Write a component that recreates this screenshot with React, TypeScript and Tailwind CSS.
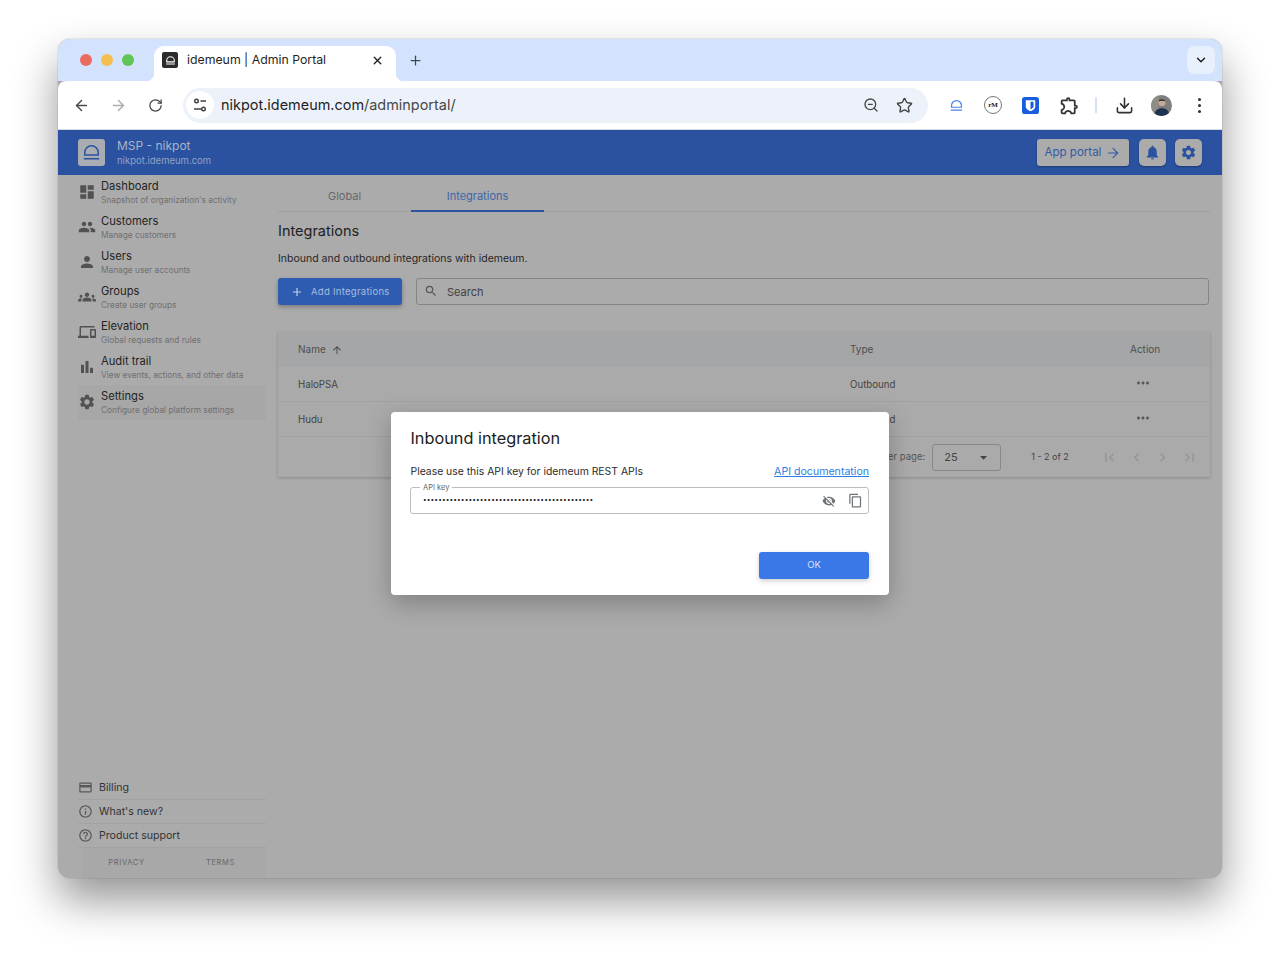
import React from "react";
import { ArrowLeft, ArrowRight, RotateCw, ZoomOut, Star, Download, X, Plus, ChevronDown } from "lucide-react";
import {
  MdDashboard, MdPeople, MdPerson, MdGroups, MdDevices, MdBarChart, MdSettings, MdOutlineCreditCard,
  MdInfoOutline, MdHelpOutline, MdVisibilityOff, MdContentCopy, MdMoreHoriz, MdNotifications,
  MdArrowUpward, MdSearch, MdAdd, MdFirstPage, MdChevronLeft, MdChevronRight, MdLastPage, MdArrowDropDown, MdOutlineExtension,
} from "react-icons/md";

function Dome({ className, strokeWidth = 2 }: { className?: string; strokeWidth?: number }) {
  return (
    <svg viewBox="0 0 24 24" fill="none" stroke="currentColor" strokeWidth={strokeWidth} className={className}>
      <path d="M5 14.5v-2.5a7 7 0 0 1 14 0v2.5z" />
      <path d="M4 18.5h16" />
    </svg>
  );
}

function Tune() {
  return (
    <svg viewBox="0 0 16 16" fill="none" stroke="#3c4043" strokeWidth="1.4" className="w-[16px] h-[16px]">
      <circle cx="4.5" cy="4" r="1.8" />
      <path d="M8.5 4H14" />
      <circle cx="11.5" cy="12" r="1.8" />
      <path d="M2 12h7.5" />
    </svg>
  );
}

function Bitwarden() {
  return (
    <svg viewBox="0 0 18 18" className="w-[17px] h-[17px]">
      <rect width="18" height="18" rx="3" fill="#175ddc" />
      <path d="M4 3.5h10v6.5c0 2.6-2.6 4.2-5 5-2.4-.8-5-2.4-5-5z" fill="#fff" />
      <path d="M9 5v8c1.7-.7 3.2-1.8 3.2-3.2V5z" fill="#175ddc" />
    </svg>
  );
}

function Avatar() {
  return (
    <svg viewBox="0 0 22 22" className="w-[21px] h-[21px] rounded-full">
      <rect width="22" height="22" fill="#7d7f7e" />
      <rect width="8" height="22" fill="#8f8d85" />
      <circle cx="11.5" cy="8" r="3.6" fill="#c9a896" />
      <path d="M8 6.5c.5-2.5 6-2.8 7 0-2 -.8-5-.8-7 0z" fill="#2c2a28" />
      <path d="M3.5 22c0-6 3.5-8 8-8s7.5 2 7.5 8z" fill="#1f3250" />
    </svg>
  );
}

const nav = [
  { Icon: MdDashboard, t: "Dashboard", s: "Snapshot of organization's activity" },
  { Icon: MdPeople, t: "Customers", s: "Manage customers" },
  { Icon: MdPerson, t: "Users", s: "Manage user accounts" },
  { Icon: MdGroups, t: "Groups", s: "Create user groups" },
  { Icon: MdDevices, t: "Elevation", s: "Global requests and rules" },
  { Icon: MdBarChart, t: "Audit trail", s: "View events, actions, and other data" },
  { Icon: MdSettings, t: "Settings", s: "Configure global platform settings", active: true },
];

const foot = [
  { Icon: MdOutlineCreditCard, t: "Billing" },
  { Icon: MdInfoOutline, t: "What's new?" },
  { Icon: MdHelpOutline, t: "Product support" },
];

export default function App() {
  return (
    <div className="w-[1280px] h-[954px] bg-white pt-[39px] px-[58px] overflow-hidden font-['Inter',sans-serif]">
      <div className="relative w-[1164px] h-[839px] rounded-[12px] overflow-hidden flex flex-col shadow-[0_0_0_1px_rgba(0,0,0,0.06),0_22px_44px_rgba(0,0,0,0.42)] bg-[#ababab]">
        {/* Tab strip */}
        <div className="h-[42px] shrink-0 bg-[#d3e3fd] flex items-start">
          <div className="flex items-center gap-[9px] pl-[22px] w-[96px] h-[42px]">
            <span className="w-[12px] h-[12px] rounded-full bg-[#ed6a5e]" />
            <span className="w-[12px] h-[12px] rounded-full bg-[#f4bf4f]" />
            <span className="w-[12px] h-[12px] rounded-full bg-[#61c554]" />
          </div>
          <div className="relative mt-[7px] w-[242px] h-[35px] bg-white rounded-t-[10px] flex items-center pl-[8px] pr-[12px] pb-[7px]">
            <span className="absolute left-[-8px] bottom-0 w-[8px] h-[8px] bg-[radial-gradient(circle_at_0_0,transparent_8px,#fff_8.5px)]" />
            <span className="absolute right-[-8px] bottom-0 w-[8px] h-[8px] bg-[radial-gradient(circle_at_100%_0,transparent_8px,#fff_8.5px)]" />
            <span className="w-[16px] h-[16px] rounded-[2px] bg-[#2b2b2b] text-white flex items-center justify-center">
              <Dome className="w-[13px] h-[13px]" />
            </span>
            <span className="ml-[9px] text-[12.3px] leading-none text-[#1f1f1f] flex-1 whitespace-nowrap">idemeum | Admin Portal</span>
            <X className="w-[13px] h-[13px] text-[#1f1f1f]" strokeWidth={2.5} />
          </div>
          <div className="ml-[12px] h-[42px] flex items-center">
            <Plus className="w-[15px] h-[15px] text-[#444746]" strokeWidth={2} />
          </div>
          <div className="ml-auto mr-[7px] mt-[7px] w-[28px] h-[28px] rounded-[8px] bg-[#e9f0fd] flex items-center justify-center">
            <ChevronDown className="w-[14px] h-[14px] text-[#1f1f1f]" strokeWidth={2.5} />
          </div>
        </div>

        {/* Toolbar */}
        <div className="h-[49px] shrink-0 bg-white flex items-center pl-[15px] rounded-t-[8px] border-b border-[#d5d9e0]">
          <ArrowLeft className="w-[17px] h-[17px] text-[#444746]" strokeWidth={2} />
          <ArrowRight className="ml-[20px] w-[17px] h-[17px] text-[#a8abaf]" strokeWidth={2} />
          <RotateCw className="ml-[21px] w-[15px] h-[15px] text-[#444746]" strokeWidth={2} />
          <div className="ml-[20px] w-[745px] h-[35px] rounded-full bg-[#edf2fa] flex items-center pl-[3px] pr-[15px]">
            <span className="w-[28px] h-[28px] rounded-full bg-white flex items-center justify-center">
              <Tune />
            </span>
            <span className="ml-[7px] text-[14.45px] leading-none text-[#1f1f1f] flex-1 whitespace-nowrap">
              nikpot.idemeum.com<span className="text-[#474747]">/adminportal/</span>
            </span>
            <ZoomOut className="w-[16px] h-[16px] text-[#444746]" strokeWidth={2} />
            <Star className="ml-[17px] w-[17px] h-[17px] text-[#444746]" strokeWidth={2} />
          </div>
          <Dome className="ml-[20px] w-[17px] h-[17px] text-[#4a80e8]" strokeWidth={1.7} />
          <span className="ml-[19px] w-[18px] h-[18px] rounded-full border border-[#777] flex items-center justify-center text-[7px] font-bold font-['Liberation_Serif',serif] text-[#222]">rM</span>
          <span className="ml-[20px] flex"><Bitwarden /></span>
          <MdOutlineExtension className="ml-[20px] w-[21px] h-[21px] text-[#333]" />
          <span className="ml-[15px] w-[2px] h-[16px] bg-[#d9e2f0]" />
          <Download className="ml-[18px] w-[19px] h-[19px] text-[#333]" strokeWidth={2} />
          <span className="ml-[17px] flex"><Avatar /></span>
          <span className="ml-[26px] flex flex-col gap-[3px]">
            <i className="w-[3px] h-[3px] rounded-full bg-[#333]" />
            <i className="w-[3px] h-[3px] rounded-full bg-[#333]" />
            <i className="w-[3px] h-[3px] rounded-full bg-[#333]" />
          </span>
        </div>

        {/* App header */}
        <div className="h-[45px] shrink-0 bg-[#2a52a0] flex items-center pl-[20px] pr-[20px]">
          <span className="w-[27px] h-[27px] rounded-[3px] bg-[#a9acb2] flex items-center justify-center text-[#2a52a0]">
            <Dome className="w-[23px] h-[23px]" strokeWidth={1.6} />
          </span>
          <div className="ml-[12px] flex flex-col gap-[2px] pt-[1px]">
            <span className="text-[12px] leading-[14px] text-[#a9b4c9]">MSP - nikpot</span>
            <span className="text-[9.5px] leading-[12px] text-[#8fa2c6]">nikpot.idemeum.com</span>
          </div>
          <div className="ml-auto w-[92px] h-[27px] rounded-[3px] bg-[#ababab] flex items-center justify-center gap-[4px] text-[#2f5aa6] shadow-[0_1px_2px_rgba(0,0,0,0.3)]">
            <span className="text-[11.5px] whitespace-nowrap">App portal</span>
            <ArrowRight className="w-[16px] h-[16px]" strokeWidth={1.6} />
          </div>
          <div className="ml-[10px] w-[27px] h-[27px] rounded-[5px] bg-[#ababab] flex items-center justify-center text-[#2a52a0] shadow-[0_1px_2px_rgba(0,0,0,0.3)]">
            <MdNotifications className="w-[17px] h-[17px]" />
          </div>
          <div className="ml-[9px] w-[27px] h-[27px] rounded-[5px] bg-[#ababab] flex items-center justify-center text-[#2a52a0] shadow-[0_1px_2px_rgba(0,0,0,0.3)]">
            <MdSettings className="w-[17px] h-[17px]" />
          </div>
        </div>

        {/* Body */}
        <div className="flex-1 flex min-h-0">
          {/* Sidebar */}
          <aside className="w-[220px] shrink-0 pl-[20px] pr-[12px] flex flex-col">
            <nav className="flex flex-col">
              {nav.map(({ Icon, t, s, active }) => (
                <div key={t} className={`h-[35px] flex items-center ${active ? "bg-[#a7a7a7]" : ""}`}>
                  <Icon className="w-[18px] h-[18px] -mt-[1px] text-[#505254] shrink-0" />
                  <div className="ml-[5px] flex flex-col">
                    <span className="text-[11.2px] leading-[15px] text-[#242424] whitespace-nowrap">{t}</span>
                    <span className="text-[8.3px] leading-[12px] text-[#6f7072] whitespace-nowrap">{s}</span>
                  </div>
                </div>
              ))}
            </nav>
            <div className="mt-auto flex flex-col">
              {foot.map(({ Icon, t }) => (
                <div key={t} className="h-[24px] flex items-center border-b border-[#a2a2a2]">
                  <Icon className="w-[15px] h-[15px] text-[#58595b] shrink-0" />
                  <span className="ml-[6px] text-[10.6px] text-[#333] whitespace-nowrap">{t}</span>
                </div>
              ))}
              <div className="ml-[4px] h-[30px] bg-[#a8a8a8] flex items-center text-[7.5px] tracking-[0.09em] text-[#66676a]">
                <span className="w-[89px] text-center">PRIVACY</span>
                <span className="w-[95px] pl-[4px] text-center">TERMS</span>
              </div>
            </div>
          </aside>

          {/* Main */}
          <main className="w-[932px] shrink-0 flex flex-col">
            <div className="h-[37px] flex shrink-0 border-b border-[#a0a0a0]">
              <div className="w-[133px] pt-[6px] flex items-center justify-center text-[11px] text-[#66676a]">Global</div>
              <div className="w-[133px] pt-[8px] flex items-center justify-center text-[11px] text-[#3f65a8] border-b-2 border-[#2a52a0] -mb-px">Integrations</div>
            </div>
            <h1 className="mt-[9px] text-[14.5px] leading-[20px] font-normal text-[#222]">Integrations</h1>
            <p className="mt-[11px] text-[10.5px] leading-[14px] text-[#262626]">Inbound and outbound integrations with idemeum.</p>
            <div className="mt-[12px] flex items-stretch h-[27px] shrink-0">
              <div className="w-[124px] rounded-[3px] bg-[#2d5cb0] flex items-center pl-[12px] text-[#a9bde0] shadow-[0_2px_4px_rgba(0,0,0,0.28)]">
                <MdAdd className="w-[14px] h-[14px] text-[#c4d0e6]" />
                <span className="ml-[7px] pt-[1px] text-[9.5px] tracking-[0.03em] whitespace-nowrap">Add Integrations</span>
              </div>
              <div className="ml-[14px] w-[793px] rounded-[3px] border border-[#858585] flex items-center pl-[7px]">
                <MdSearch className="w-[14px] h-[14px] -mt-[2px] text-[#555]" />
                <span className="ml-[9px] pt-[1px] text-[11px] text-[#404040]">Search</span>
              </div>
            </div>

            <div className="mt-[27px] shadow-[0_1px_3px_rgba(0,0,0,0.2)] text-[9.7px] text-[#444]">
              <div className="h-[35px] bg-[#a5a6a7] grid grid-cols-[552px_280px_80px] items-center pl-[20px]">
                <span className="flex items-center gap-[5px] text-[10px] text-[#4d4e50]">Name <MdArrowUpward className="w-[12px] h-[12px]" /></span>
                <span className="text-[10px] text-[#4d4e50]">Type</span>
                <span className="text-[10px] text-[#4d4e50]">Action</span>
              </div>
              <div className="h-[35px] bg-[#aaaaaa] border-b border-[#a2a2a2] grid grid-cols-[552px_280px_80px] items-center pl-[20px]">
                <span className="pt-[2px]">HaloPSA</span>
                <span className="pt-[2px]">Outbound</span>
                <MdMoreHoriz className="ml-[4px] -mt-[2px] w-[18px] h-[18px] text-[#58595b]" />
              </div>
              <div className="h-[35px] bg-[#aaaaaa] border-b border-[#a2a2a2] grid grid-cols-[552px_280px_80px] items-center pl-[20px]">
                <span className="pt-[2px]">Hudu</span>
                <span className="pt-[2px]">Outbound</span>
                <MdMoreHoriz className="ml-[4px] -mt-[2px] w-[18px] h-[18px] text-[#58595b]" />
              </div>
              <div className="h-[40px] bg-[#aaaaaa] flex items-center justify-end pr-[12px]">
                <span className="text-[9.5px] text-[#555]">Rows per page:</span>
                <div className="ml-[7px] w-[69px] h-[27px] rounded-[3px] border border-[#888] flex items-center justify-between pl-[11px] pr-[8px] text-[11px] text-[#444]">
                  25
                  <MdArrowDropDown className="w-[17px] h-[17px]" />
                </div>
                <span className="ml-[30px] w-[38px] text-[9px] text-[#444] whitespace-nowrap">1 - 2 of 2</span>
                <div className="ml-[32px] flex gap-[9.6px] text-[#949596]">
                  <MdFirstPage className="w-[17px] h-[17px]" />
                  <MdChevronLeft className="w-[17px] h-[17px]" />
                  <MdChevronRight className="w-[17px] h-[17px]" />
                  <MdLastPage className="w-[17px] h-[17px]" />
                </div>
              </div>
            </div>
          </main>
        </div>

        {/* Modal */}
        <div className="absolute left-[333px] top-[373px] w-[498px] h-[183px] bg-white rounded-[4px] shadow-[0_8px_24px_rgba(0,0,0,0.25)] pl-[19px] pr-[20px] pt-[15px] flex flex-col">
          <h2 className="text-[16.3px] leading-[22px] font-normal text-[#212121] pl-[0.5px]">Inbound integration</h2>
          <div className="mt-[16px] flex justify-between items-center h-[14px] pl-[0.5px]">
            <span className="text-[10.4px] text-[#2b2b2b]">Please use this API key for idemeum REST APIs</span>
            <a className="text-[10.6px] text-[#2b7de0] underline">API documentation</a>
          </div>
          <div className="relative mt-[8px] h-[27px] rounded-[3px] border border-[#bdbdbd] flex items-center pl-[12px] pr-[5px]">
            <span className="absolute left-[9px] top-[-5px] bg-white px-[3px] text-[7.5px] leading-[10px] text-[#666]">API key</span>
            <span className="flex-1 text-[6.5px] leading-none tracking-[0.02em] text-[#222] overflow-hidden whitespace-nowrap">
              {"•".repeat(45)}
            </span>
            <MdVisibilityOff className="w-[14px] h-[14px] text-[#70757a]" />
            <MdContentCopy className="ml-[12px] w-[15px] h-[15px] text-[#70757a]" />
          </div>
          <div className="mt-[38px] flex justify-end">
            <div className="w-[110px] h-[27px] rounded-[3px] bg-[#3b78e7] flex items-center justify-center text-[9.5px] text-[#d5e2f8] shadow-[0_2px_5px_rgba(0,0,0,0.2)]">OK</div>
          </div>
        </div>
      </div>
    </div>
  );
}
